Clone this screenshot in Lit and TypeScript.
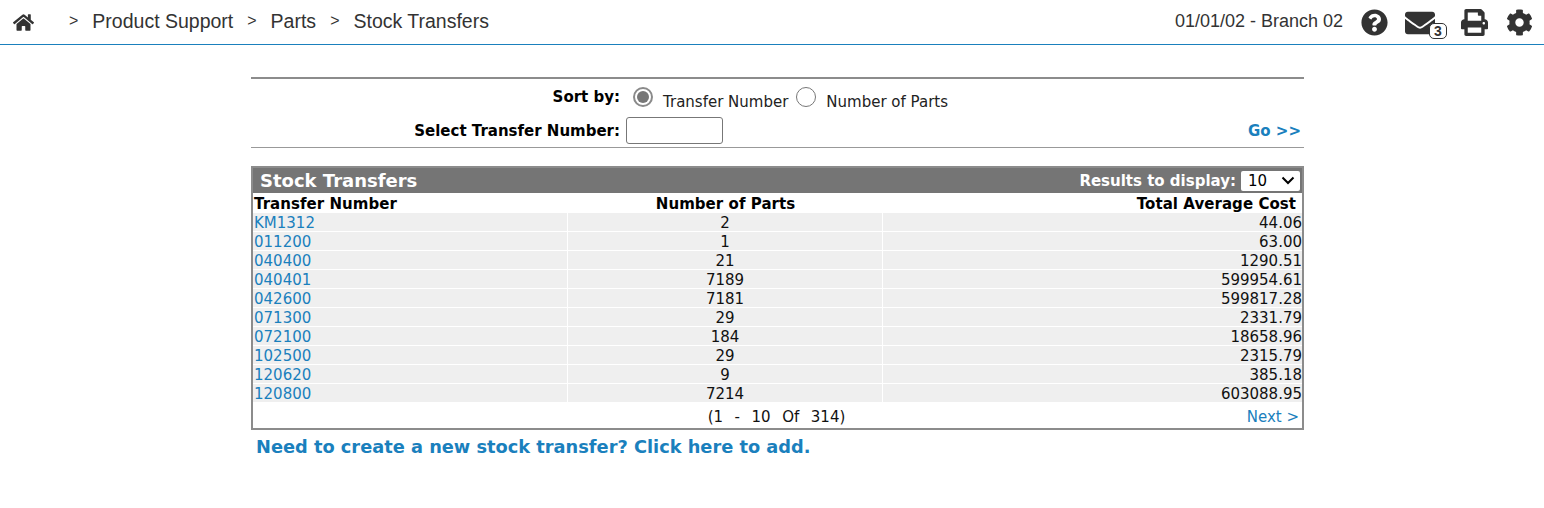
import { LitElement, html, css } from "lit";
import { customElement } from "lit/decorators.js";

const ROWS: [string, string, string][] = [
  ["KM1312", "2", "44.06"],
  ["011200", "1", "63.00"],
  ["040400", "21", "1290.51"],
  ["040401", "7189", "599954.61"],
  ["042600", "7181", "599817.28"],
  ["071300", "29", "2331.79"],
  ["072100", "184", "18658.96"],
  ["102500", "29", "2315.79"],
  ["120620", "9", "385.18"],
  ["120800", "7214", "603088.95"],
];

const ICONS = {
  home: ["0 0 576 512", "M280.37 148.26L96 300.11V464a16 16 0 0 0 16 16l112.06-.29a16 16 0 0 0 15.92-16V368a16 16 0 0 1 16-16h64a16 16 0 0 1 16 16v95.64a16 16 0 0 0 16 16.05L464 480a16 16 0 0 0 16-16V300L295.67 148.26a12.19 12.19 0 0 0-15.3 0zM571.6 251.47L488 182.56V44.05a12 12 0 0 0-12-12h-56a12 12 0 0 0-12 12v72.61L318.47 43a48 48 0 0 0-61 0L4.34 251.47a12 12 0 0 0-1.6 16.9l25.5 31A12 12 0 0 0 45.15 301l235.22-193.74a12.19 12.19 0 0 1 15.3 0L530.9 301a12 12 0 0 0 16.9-1.6l25.5-31a12 12 0 0 0-1.7-16.93z"],
  help: ["0 0 512 512", "M504 256c0 136.997-111.043 248-248 248S8 392.997 8 256C8 119.083 119.043 8 256 8s248 111.083 248 248zM262.655 90c-54.497 0-89.255 22.957-116.549 63.758-3.536 5.286-2.353 12.415 2.715 16.258l34.699 26.31c5.205 3.947 12.621 3.008 16.665-2.122 17.864-22.658 30.113-35.797 57.303-35.797 20.429 0 45.698 13.148 45.698 32.958 0 14.976-12.363 22.667-32.534 33.976C247.128 238.528 216 254.941 216 296v4c0 6.627 5.373 12 12 12h56c6.627 0 12-5.373 12-12v-1.333c0-28.462 83.186-29.647 83.186-106.667 0-58.002-60.165-102-116.531-102zM256 338c-25.365 0-46 20.635-46 46 0 25.364 20.635 46 46 46s46-20.636 46-46c0-25.365-20.635-46-46-46z"],
  mail: ["0 0 512 512", "M502.3 190.8c3.9-3.1 9.7-.2 9.7 4.7V400c0 26.5-21.5 48-48 48H48c-26.5 0-48-21.5-48-48V195.6c0-5 5.7-7.8 9.7-4.7 22.4 17.4 52.1 39.5 154.1 113.6 21.1 15.4 56.7 47.8 92.2 47.6 35.7.3 72-32.8 92.3-47.6 102-74.1 131.6-96.3 154-113.7zM256 320c23.2.4 56.6-29.2 73.4-41.4 132.7-96.3 142.8-104.7 173.4-128.7 5.8-4.5 9.2-11.5 9.2-18.9v-19c0-26.5-21.5-48-48-48H48C21.5 64 0 85.5 0 112v19c0 7.4 3.4 14.3 9.2 18.9 30.6 23.9 40.7 32.4 173.4 128.7 16.8 12.2 50.2 41.8 73.4 41.4z"],
  print: ["0 0 512 512", "M448 192V77.25c0-8.49-3.37-16.62-9.37-22.63L393.37 9.37c-6-6-14.14-9.37-22.63-9.37H96C78.33 0 64 14.33 64 32v160c-35.35 0-64 28.65-64 64v112c0 8.84 7.16 16 16 16h48v96c0 17.67 14.33 32 32 32h320c17.67 0 32-14.33 32-32v-96h48c8.84 0 16-7.16 16-16V256c0-35.35-28.65-64-64-64zm-64 256H128v-96h256v96zm0-224H128V64h192v48c0 8.84 7.16 16 16 16h48v96zm48 72c-13.25 0-24-10.75-24-24 0-13.26 10.75-24 24-24s24 10.74 24 24c0 13.25-10.75 24-24 24z"],
  cog: ["0 0 512 512", "M487.4 315.7l-42.6-24.6c4.3-23.2 4.3-47 0-70.2l42.6-24.6c4.9-2.8 7.1-8.6 5.5-14-11.1-35.6-30-67.8-54.7-94.6-3.8-4.1-10-5.1-14.8-2.3L380.8 110c-17.9-15.4-38.5-27.3-60.8-35.1V25.8c0-5.6-3.9-10.5-9.4-11.7-36.7-8.2-74.3-7.8-109.2 0-5.5 1.2-9.4 6.1-9.4 11.7V75c-22.2 7.9-42.8 19.8-60.8 35.1L88.7 85.5c-4.9-2.8-11-1.9-14.8 2.3-24.7 26.7-43.6 58.9-54.7 94.6-1.7 5.4.6 11.2 5.5 14L67.3 221c-4.3 23.2-4.3 47 0 70.2l-42.6 24.6c-4.9 2.8-7.1 8.6-5.5 14 11.1 35.6 30 67.8 54.7 94.6 3.8 4.1 10 5.1 14.8 2.3l42.6-24.6c17.9 15.4 38.5 27.3 60.8 35.1v49.2c0 5.6 3.9 10.5 9.4 11.7 36.7 8.2 74.3 7.8 109.2 0 5.5-1.2 9.4-6.1 9.4-11.7v-49.2c22.2-7.9 42.8-19.8 60.8-35.1l42.6 24.6c4.9 2.8 11 1.9 14.8-2.3 24.7-26.7 43.6-58.9 54.7-94.6 1.5-5.5-.7-11.3-5.6-14.1zM256 336c-44.1 0-80-35.9-80-80s35.9-80 80-80 80 35.9 80 80-35.9 80-80 80z"],
};

function icon(name: keyof typeof ICONS, cls: string) {
  const [vb, d] = ICONS[name];
  return html`<svg class=${cls} viewBox=${vb} aria-hidden="true"><path fill="currentColor" d=${d}></path></svg>`;
}

@customElement("app-root")
export class AppRoot extends LitElement {
  static styles = css`
    :host {
      display: block;
      font-family: "DejaVu Sans", Verdana, sans-serif;
      font-size: 15px;
      color: #000;
      background: #fff;
      min-height: 508px;
    }
    a { color: #1a80bd; text-decoration: none; }

    .topbar {
      height: 44px;
      border-bottom: 1px solid #1a80bd;
      display: flex;
      align-items: center;
      font-family: "Liberation Sans", Arial, sans-serif;
      color: #333;
      font-size: 19.5px;
    }
    .crumbs { display: flex; align-items: center; flex: 1; padding-left: 13px; padding-bottom: 2px; }
    .home { width: 21px; height: 19px; color: #333; margin-right: 35px; margin-top: 2px; }
    .sep { font-size: 16px; margin-right: 14px; }
    .crumb { margin-right: 14px; }
    .tools { display: flex; align-items: center; }
    .date { font-size: 18px; margin-right: 18px; padding-bottom: 2px; }
    .i-help { width: 27px; height: 27px; margin-right: 17px; }
    .mail { position: relative; width: 30px; height: 30px; margin-right: 26px; margin-top: 2px; display: block; }
    .i-mail { width: 30px; height: 30px; display: block; }
    .badge {
      position: absolute;
      left: 24px;
      top: 15px;
      width: 18px;
      height: 16px;
      box-sizing: border-box;
      border: 1px solid #333;
      border-radius: 5px;
      background: #fff;
      font-size: 14px;
      font-weight: bold;
      line-height: 15px;
      text-align: center;
    }
    .i-print { width: 27px; height: 27px; margin-right: 18px; }
    .i-cog { width: 27px; height: 27px; margin-right: 11px; }

    .content { width: 1053px; margin: 32px 0 0 251px; }

    .filter {
      border-top: 2px solid #8c8c8c;
      border-bottom: 1px solid #999;
      height: 68px;
    }
    .f-row { display: flex; align-items: center; }
    .f-sort { height: 36px; }
    .f-label { width: 369px; text-align: right; font-weight: bold; font-size: 15px; white-space: nowrap; }
    .radio {
      width: 20px; height: 20px; box-sizing: border-box; flex: none;
      border: 1px solid #777; border-radius: 50%;
      background: #fff; display: inline-flex; align-items: center; justify-content: center;
    }
    .radio.on { border: 2px solid #8a8a8a; }
    .radio.on::after { content: ""; width: 12px; height: 12px; border-radius: 50%; background: #777; }
    .opt { font-size: 15px; color: #222; position: relative; top: 5px; white-space: nowrap; }
    .r1 { margin-left: 13px; }
    .o1 { margin-left: 10px; }
    .r2 { margin-left: 8px; }
    .o2 { margin-left: 10px; }
    .f-select { height: 32px; justify-content: space-between; padding-bottom: 2px; box-sizing: border-box; }
    .f-left { display: flex; align-items: center; }
    .f-select .f-label { position: relative; top: 1px; }
    .f-input {
      width: 97px; height: 27px; box-sizing: border-box;
      border: 1px solid #777; border-radius: 3px; background: #fff;
      margin-left: 6px; padding: 0;
    }
    .go { font-weight: bold; font-size: 15px; margin-right: 3px; position: relative; top: 1px; }

    .panel {
      margin-top: 18px;
      border: 2px solid #8c8c8c;
      height: 260px;
    }
    .titlebar {
      height: 25px;
      background: #757575;
      display: flex;
      align-items: center;
      justify-content: space-between;
      color: #fff;
      font-weight: bold;
    }
    .title { font-size: 18px; margin-left: 7px; }
    .results { display: flex; align-items: center; font-size: 15px; margin-right: 2px; }
    .select {
      width: 59px; height: 20px; margin-left: 5px; background: #fff; color: #000;
      border-radius: 2px; font-weight: normal; font-size: 15px;
      display: flex; align-items: center; justify-content: space-between;
      padding: 0 5px 0 7px; box-sizing: border-box;
    }
    .chev { width: 14px; height: 9px; }

    table { width: 100%; border-collapse: separate; border-spacing: 0; table-layout: fixed; font-size: 15px; }
    col.c1 { width: 315px; }
    col.c2 { width: 315px; }
    th { height: 20px; box-sizing: border-box; padding: 2px 1px 0; font-size: 15px; font-weight: bold; color: #000; line-height: 18px; letter-spacing: 0.05px; white-space: nowrap; }
    th.l, td.l { text-align: left; }
    th.c, td.c { text-align: center; }
    th.r { text-align: right; padding-right: 6px; }
    td { padding: 2px 1px 0; box-sizing: border-box; height: 19px; background: #efefef; line-height: 16px; color: #111; border-bottom: 1px solid #fff; border-right: 1px solid #fff; }
    td.r { text-align: right; border-right: 0; padding-right: 0; }

    .pager { display: grid; grid-template-columns: 1fr auto 1fr; align-items: center; height: 28px; font-size: 15px; color: #111; }
    .range { white-space: pre; padding-right: 2px; word-spacing: 1px; grid-column: 2; }
    .next { grid-column: 3; justify-self: end; margin-right: 3px; font-size: 15px; }
    .create { display: block; margin: 6px 0 0 5px; font-weight: bold; font-size: 17.8px; white-space: nowrap; }
  `;

  render() {
    return html`
      <header class="topbar">
        <div class="crumbs">
          ${icon("home", "home")}
          <span class="sep">&gt;</span><span class="crumb">Product Support</span>
          <span class="sep">&gt;</span><span class="crumb">Parts</span>
          <span class="sep">&gt;</span><span class="crumb">Stock Transfers</span>
        </div>
        <div class="tools">
          <span class="date">01/01/02 - Branch 02</span>
          ${icon("help", "i-help")}
          <span class="mail">${icon("mail", "i-mail")}<span class="badge">3</span></span>
          ${icon("print", "i-print")}
          ${icon("cog", "i-cog")}
        </div>
      </header>
      <main class="content">
        <section class="filter">
          <div class="f-row f-sort">
            <span class="f-label">Sort by:</span>
            <span class="radio on r1"></span><span class="opt o1">Transfer Number</span>
            <span class="radio r2"></span><span class="opt o2">Number of Parts</span>
          </div>
          <div class="f-row f-select">
            <div class="f-left">
              <span class="f-label">Select Transfer Number:</span>
              <input class="f-input" type="text" />
            </div>
            <a class="go" href="#">Go &gt;&gt;</a>
          </div>
        </section>
        <section class="panel">
          <div class="titlebar">
            <span class="title">Stock Transfers</span>
            <div class="results">
              Results to display:
              <span class="select">10
                <svg class="chev" viewBox="0 0 14 9" aria-hidden="true"><path d="M1.5 1.5 L7 7 L12.5 1.5" fill="none" stroke="#000" stroke-width="2"></path></svg>
              </span>
            </div>
          </div>
          <table>
            <colgroup><col class="c1" /><col class="c2" /><col /></colgroup>
            <thead><tr>
              <th class="l">Transfer Number</th><th class="c">Number of Parts</th><th class="r">Total Average Cost</th>
            </tr></thead>
            <tbody>
              ${ROWS.map(r => html`<tr>
                <td class="l"><a href="#">${r[0]}</a></td><td class="c">${r[1]}</td><td class="r">${r[2]}</td>
              </tr>`)}
            </tbody>
          </table>
          <div class="pager">
            <span class="range">(1  -  10  Of  314)</span>
            <a class="next" href="#">Next &gt;</a>
          </div>
        </section>
        <a class="create" href="#">Need to create a new stock transfer? Click here to add.</a>
      </main>
    `;
  }
}
